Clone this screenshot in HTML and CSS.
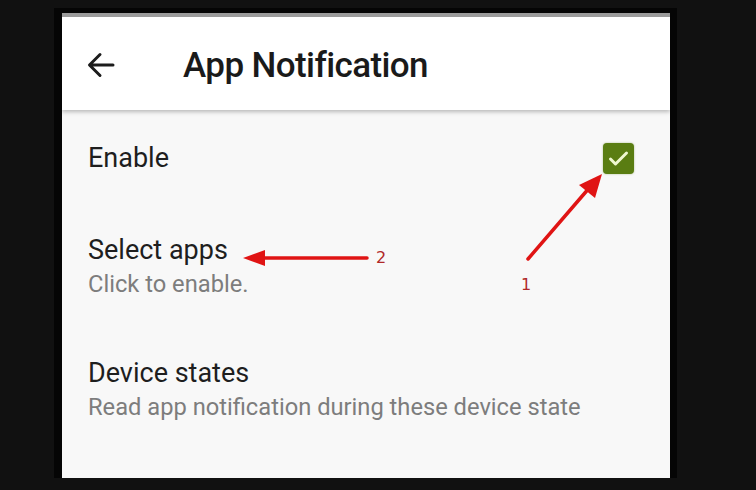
FILE: index.html
```html
<!DOCTYPE html>
<html lang="en">
<head>
  <meta charset="UTF-8" />
  <title>App Notification</title>
  <link rel="stylesheet" href="styles.css">
</head>
<body>

  <div class="frame">
    <div class="screen">

      <header class="appbar">
        <svg class="back" width="28" height="26" viewBox="0 0 28 26">
          <path d="M26 13H3M13 2.5L2.5 13 13 23.5" fill="none" stroke="#1c1c1c" stroke-width="3" stroke-linecap="round" stroke-linejoin="round"/>
        </svg>
        <h1 class="title">App Notification</h1>
      </header>

      <div class="list">
        <div class="row row-enable">
          <span class="label">Enable</span>
          <span class="check">
            <svg width="31" height="31" viewBox="0 0 31 31">
              <path d="M7.5 16l5 5 11-11" fill="none" stroke="#eef7cf" stroke-width="3" stroke-linecap="round" stroke-linejoin="round"/>
            </svg>
          </span>
        </div>

        <div class="row">
          <span class="label">Select apps</span>
          <span class="sub">Click to enable.</span>
        </div>

        <div class="row">
          <span class="label">Device states</span>
          <span class="sub">Read app notification during these device state</span>
        </div>
      </div>

      <!-- annotation arrows drawn on top of the screenshot -->
      <svg class="marks" width="608" height="465" viewBox="0 0 608 465">
        <g stroke="#e01414" stroke-width="3.5" stroke-linecap="round" fill="#e01414">
          <line x1="466" y1="242" x2="528" y2="170"/>
          <polygon points="540,157 533,181 517,168" stroke="none"/>
          <line x1="305" y1="241" x2="200" y2="241"/>
          <polygon points="181,241 203,233 203,249" stroke="none"/>
        </g>
      </svg>
      <span class="tag tag-1">1</span>
      <span class="tag tag-2">2</span>

    </div>
  </div>

</body>
</html>
```

FILE: styles.css
```css
body {
  margin: 0;
  padding: 0;
  background: #111;
  font-family: Roboto, "Noto Sans", sans-serif;
}

.frame {
  width: 608px;
  margin: 8px 0 0 54px;
  padding: 5px 7px 0 8px;
  background: #050505;
}

.screen {
  position: relative;
  width: 608px;
  height: 461px;
  border-top: 4px solid #9b9b9b;
  background: #f8f8f8;
  overflow: hidden;
}

.appbar {
  display: flex;
  align-items: center;
  height: 93px;
  padding-left: 25px;
  background: #fff;
  box-shadow: 0 2px 4px rgba(0, 0, 0, 0.25);
  position: relative;
  z-index: 1;
}

.back {
  margin-top: 3px;
}

.title {
  margin: 4px 0 0 68px;
  font-size: 35px;
  font-weight: 500;
  letter-spacing: -0.6px;
  color: #1a1a1a;
}

.list {
  display: flex;
  flex-direction: column;
}

.row {
  display: flex;
  flex-direction: column;
  padding: 28px 26px 27px;
}

.row-enable {
  flex-direction: row;
  align-items: center;
  justify-content: space-between;
  height: 96px;
  box-sizing: border-box;
  padding: 0 36px 0 26px;
}

.label {
  font-size: 27px;
  line-height: 32px;
  color: #1e1e1e;
}

.sub {
  font-size: 23.7px;
  line-height: 36px;
  color: #7d7d7d;
}

.check {
  display: flex;
  width: 31px;
  height: 31px;
  border-radius: 4px;
  background: #5a7d12;
  box-shadow: 0 0 2px rgba(90, 125, 18, 0.5);
}

.marks {
  position: absolute;
  left: 0;
  top: 0;
  z-index: 2;
}

.tag {
  position: absolute;
  z-index: 2;
  font-family: "DejaVu Sans", sans-serif;
  font-size: 16px;
  color: #b02828;
}

.tag-1 {
  left: 459px;
  top: 258px;
}

.tag-2 {
  left: 314px;
  top: 231px;
}
```
